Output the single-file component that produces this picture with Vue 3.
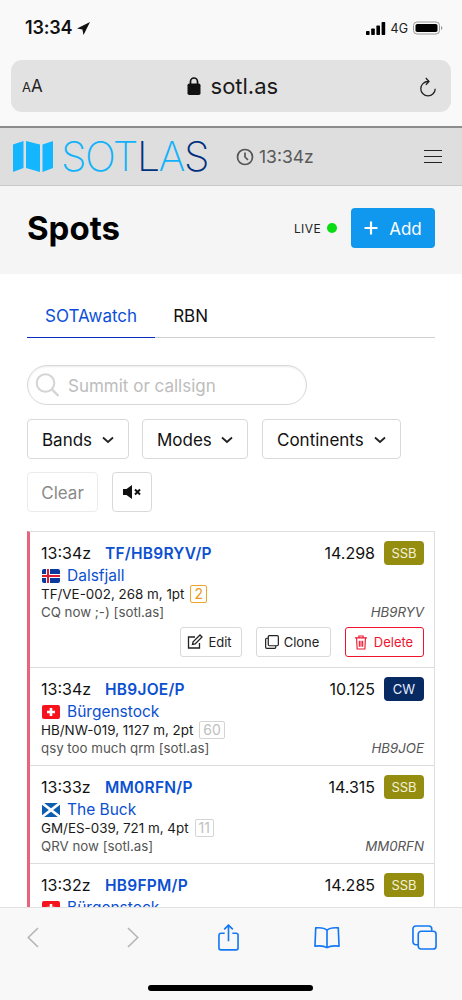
<script setup>
const spots = [
  { time: '13:34z', call: 'TF/HB9RYV/P', freq: '14.298', mode: 'SSB', flag: 'is', name: 'Dalsfjall', info: 'TF/VE-002, 268 m, 1pt', count: '2', countClass: 'orange', note: 'CQ now ;-) [sotl.as]', op: 'HB9RYV', actions: true },
  { time: '13:34z', call: 'HB9JOE/P', freq: '10.125', mode: 'CW', flag: 'ch', name: 'Bürgenstock', info: 'HB/NW-019, 1127 m, 2pt', count: '60', countClass: '', note: 'qsy too much qrm [sotl.as]', op: 'HB9JOE' },
  { time: '13:33z', call: 'MM0RFN/P', freq: '14.315', mode: 'SSB', flag: 'sc', name: 'The Buck', info: 'GM/ES-039, 721 m, 4pt', count: '11', countClass: '', note: 'QRV now [sotl.as]', op: 'MM0RFN' },
  { time: '13:32z', call: 'HB9FPM/P', freq: '14.285', mode: 'SSB', flag: 'ch', name: 'Bürgenstock', info: 'HB/NW-019, 1127 m, 2pt', count: '60', countClass: '', note: 'QRV now [sotl.as]', op: 'HB9FPM' }
]
const filters = ['Bands', 'Modes', 'Continents']
</script>

<template>
  <div class="page">
    <header class="safari-top">
      <div class="status">
        <div class="status-left">
          <span class="clock">13:34</span>
          <svg class="loc" viewBox="0 0 12 12" width="13" height="13"><path d="M12 0 6 12 5 7 0 6z" fill="#111"/></svg>
        </div>
        <div class="status-right">
          <svg width="20" height="13" viewBox="0 0 20 13"><rect x="0" y="9" width="3.600" height="4" rx=".7"/><rect x="5.200" y="6.500" width="3.600" height="6.500" rx=".7"/><rect x="10.400" y="3.500" width="3.600" height="9.500" rx=".7"/><rect x="15.600" y="0" width="3.600" height="13" rx=".7"/></svg>
          <span class="net">4G</span>
          <svg width="30" height="14" viewBox="0 0 30 14"><rect x=".5" y="1" width="26" height="12" rx="3.500" fill="none" stroke="#999"/><rect x="2.500" y="3" width="22" height="8" rx="1.800" fill="#000"/><path d="M28 5v4c.8-.3 1.300-1 1.300-2s-.5-1.700-1.300-2z" fill="#999"/></svg>
        </div>
      </div>
      <div class="address">
        <span class="aa"><small>A</small>A</span>
        <div class="host">
          <svg width="14" height="20" viewBox="0 0 14 20"><path d="M3.500 8V5.500a3.500 3.500 0 0 1 7 0V8" fill="none" stroke="#111" stroke-width="1.700"/><rect x="0.500" y="7.500" width="13" height="11.500" rx="1.800" fill="#111"/></svg>
          <span>sotl.as</span>
        </div>
        <svg class="reload" width="18" height="21" viewBox="0 0 18 21"><path d="M9 4.500a7.200 7.200 0 1 0 7.200 7.200" fill="none" stroke="#222" stroke-width="1.300"/><path d="M6.800 1 10 4.500 6.800 7.800" fill="none" stroke="#222" stroke-width="1.300"/></svg>
      </div>
    </header>

    <nav class="navbar">
      <div class="brand">
        <svg width="40" height="31" viewBox="0 0 40 31"><path d="M0 3.500 10.500 0v27L0 31z" fill="#14b6ff"/><path d="M13 0l14 3.500V31L13 27z" fill="#14b6ff"/><path d="M29.500 3.500 40 0v27l-10.500 4z" fill="#14b6ff"/></svg>
        <span class="logo"><i>SOT</i><b>L</b><i>A</i><b>S</b></span>
      </div>
      <div class="nav-time">
        <svg width="18" height="18" viewBox="0 0 18 18"><circle cx="9" cy="9" r="7.500" fill="none" stroke="#555" stroke-width="1.700"/><path d="M9 4.500V9l3 3" fill="none" stroke="#555" stroke-width="1.700"/></svg>
        <span>13:34z</span>
      </div>
      <div class="burger"><span></span><span></span><span></span></div>
    </nav>

    <section class="hero">
      <h1>Spots</h1>
      <div class="hero-right">
        <span class="live">LIVE</span>
        <span class="dot"></span>
        <button class="add">
          <svg width="14" height="14" viewBox="0 0 14 14"><path d="M7 .5v13M.5 7h13" stroke="#fff" stroke-width="2.200"/></svg>
          <span>Add</span>
        </button>
      </div>
    </section>

    <main class="content">
      <div class="tabs">
        <span class="tab active">SOTAwatch</span>
        <span class="tab">RBN</span>
      </div>

      <div class="search">
        <svg width="27" height="27" viewBox="0 0 27 27"><circle cx="11.500" cy="11" r="8.800" fill="none" stroke="#d4d4d4" stroke-width="2"/><path d="M18 17.500l6.500 6.500" stroke="#d4d4d4" stroke-width="2.400"/></svg>
        <span class="placeholder">Summit or callsign</span>
      </div>

      <div class="filter-row">
        <button v-for="f in filters" :key="f" class="btn filter">
          <span>{{ f }}</span>
          <svg width="12" height="8" viewBox="0 0 12 8"><path d="M1 1.500l5 4.500 5-4.500" fill="none" stroke="#222" stroke-width="1.800"/></svg>
        </button>
      </div>

      <div class="filter-row second">
        <button class="btn clear">Clear</button>
        <button class="btn mute">
          <svg width="19" height="14" viewBox="0 0 19 14"><path d="M0 4h3.500L9 0v14l-5.500-4H0z" fill="#111"/><path d="M12 4.500l5 5M17 4.500l-5 5" stroke="#111" stroke-width="2"/></svg>
        </button>
      </div>

      <div class="list">
        <article v-for="s in spots" :key="s.call" class="spot">
          <div class="line-one">
            <span class="time">{{ s.time }}</span>
            <span class="call">{{ s.call }}</span>
            <span class="freq">{{ s.freq }}</span>
            <span class="mode" :class="s.mode.toLowerCase()">{{ s.mode }}</span>
          </div>
          <div class="line-two">
            <svg class="flag" width="18" height="14" viewBox="0 0 18 14">
              <template v-if="s.flag === 'is'">
                <rect width="18" height="14" rx="2" fill="#0a3a9c"/>
                <path d="M0 7h18M6 0v14" stroke="#fff" stroke-width="4"/>
                <path d="M0 7h18M6 0v14" stroke="#dc1e35" stroke-width="2"/>
              </template>
              <template v-else-if="s.flag === 'ch'">
                <rect width="18" height="14" rx="2" fill="#f5141e"/>
                <path d="M9 3v8M5 7h8" stroke="#fff" stroke-width="2.600"/>
              </template>
              <template v-else>
                <rect width="18" height="14" rx="1" fill="#0d5eaf"/>
                <path d="M0 0l18 14M18 0 0 14" stroke="#fff" stroke-width="2.600"/>
              </template>
            </svg>
            <span class="summit">{{ s.name }}</span>
          </div>
          <div class="line-three">
            <span>{{ s.info }}</span>
            <span class="count" :class="s.countClass">{{ s.count }}</span>
          </div>
          <div class="line-four">
            <span>{{ s.note }}</span>
            <em>{{ s.op }}</em>
          </div>
          <div v-if="s.actions" class="actions">
            <button class="act">
              <svg width="16" height="16" viewBox="0 0 16 16"><path d="M12.500 9v5H1.500V3H8" fill="none" stroke="#222" stroke-width="1.300"/><path d="M5.500 10.500l.6-2.700L13 1l2 2-6.800 6.900z" fill="none" stroke="#222" stroke-width="1.300"/></svg>
              <span>Edit</span>
            </button>
            <button class="act">
              <svg width="14" height="14" viewBox="0 0 15 15"><rect x="3.500" y=".7" width="10.800" height="10.800" rx="1.200" fill="none" stroke="#222" stroke-width="1.300"/><path d="M3.500 3.500H1.800A1.100 1.100 0 0 0 .7 4.600v8.600a1.100 1.100 0 0 0 1.100 1.100h8.600a1.100 1.100 0 0 0 1.100-1.100v-1.700" fill="none" stroke="#222" stroke-width="1.300"/></svg>
              <span>Clone</span>
            </button>
            <button class="act danger">
              <svg width="12" height="15" viewBox="0 0 13 16"><path d="M0 3h13M4.200 3V1h4.600v2M1.700 3l.6 12h8.400l.6-12M4.700 6v6.500M6.500 6v6.500M8.300 6v6.500" fill="none" stroke="#f0142f" stroke-width="1.200"/></svg>
              <span>Delete</span>
            </button>
          </div>
        </article>
      </div>
    </main>

    <footer class="safari-bottom">
      <div class="tools">
        <span class="tool"><svg width="12" height="21" viewBox="0 0 12 21"><path d="M11 1 1.300 10.500 11 20" fill="none" stroke="#b5b5b5" stroke-width="1.600"/></svg></span>
        <span class="tool"><svg width="12" height="21" viewBox="0 0 12 21"><path d="M1 1l9.700 9.500L1 20" fill="none" stroke="#b5b5b5" stroke-width="1.600"/></svg></span>
        <span class="tool"><svg width="21" height="27" viewBox="0 0 22 28"><path d="M7 9.500H3a2 2 0 0 0-2 2V25a2 2 0 0 0 2 2h16a2 2 0 0 0 2-2V11.500a2 2 0 0 0-2-2h-4M11 18V1.500M6.500 5.500 11 1l4.500 4.500" fill="none" stroke="#1478f5" stroke-width="1.700"/></svg></span>
        <span class="tool"><svg width="26" height="23" viewBox="0 0 27 23"><path d="M13.500 4C11 1.500 7 1 1.800 1.500L1 20.500c5-.6 9.500-.4 12.500 1.500 3-1.900 7.500-2.100 12.500-1.500l-.8-19C20 1 16 1.500 13.500 4zM13.500 4v18" fill="none" stroke="#1478f5" stroke-width="1.700" stroke-linejoin="round"/></svg></span>
        <span class="tool"><svg width="25" height="25" viewBox="0 0 26 26"><path d="M6.500 20.500H4A3 3 0 0 1 1 17.500V4a3 3 0 0 1 3-3h13.500a3 3 0 0 1 3 3v2" fill="none" stroke="#1478f5" stroke-width="1.700"/><rect x="6.500" y="6.500" width="18.500" height="18.500" rx="3" fill="none" stroke="#1478f5" stroke-width="1.700"/></svg></span>
      </div>
      <div class="home"></div>
    </footer>
  </div>
</template>

<style>
html, body { margin: 0; background: #fff; }
</style>

<style scoped>
.page {
  position: relative;
  width: 462px;
  height: 1000px;
  overflow: hidden;
  background: #fff;
  font-family: Inter, "Liberation Sans", sans-serif;
  color: #111;
}
button { font-family: inherit; padding: 0; background: #fff; cursor: pointer; }

.safari-top {
  height: 126px;
  background: #f9f9f9;
  border-bottom: 2px solid #8c8c8c;
  padding: 0 11px;
  width: 440px;
}
.status { height: 60px; display: flex; justify-content: space-between; align-items: flex-start; padding: 18px 8px 0 14px; box-sizing: border-box; }
.status-left { display: flex; align-items: center; gap: 5px; }
.clock { font-size: 18px; font-weight: 600; line-height: 20px; letter-spacing: -.2px; }
.status-right { display: flex; align-items: center; gap: 5px; height: 20px; }
.net { font-size: 12.500px; color: #222; }
.address { height: 52px; background: #e2e2e2; border-radius: 11px; display: flex; align-items: center; justify-content: space-between; padding: 0 14px 0 11px; position: relative; }
.aa { font-size: 17px; color: #222; line-height: 1; }
.aa small { font-size: 13px; }
.host { display: flex; align-items: center; gap: 10px; font-size: 22px; color: #1a1a1a; margin-left: 3px; }
.reload { margin-top: 2px; }

.navbar { height: 57px; background: #dedede; border-bottom: 1px solid #c9c9c9; display: flex; align-items: center; padding: 0 20px 0 13px; }
.brand { display: flex; align-items: center; gap: 8px; }
.logo { font-family: Inter, "Open Sans", sans-serif; font-weight: 200; font-size: 41px; line-height: 1; letter-spacing: -1.500px; }
.logo i { font-style: normal; color: #12b2fb; }
.logo b { font-weight: 200; color: #00307f; }
.nav-time { display: flex; align-items: center; gap: 5px; margin-left: 28px; font-size: 17.500px; color: #5a5a5a; }
.burger { margin-left: auto; width: 18px; display: flex; flex-direction: column; gap: 5px; }
.burger span { display: block; height: 1px; background: #222; }

.hero { height: 84px; padding: 0 27px 4px; background: #f5f5f5; display: flex; align-items: center; justify-content: space-between; }
.hero h1 { margin: 0; font-size: 33px; font-weight: 700; color: #000; line-height: 1; }
.hero-right { display: flex; align-items: center; }
.live { font-size: 12px; letter-spacing: .4px; color: #222; }
.dot { width: 10px; height: 10px; border-radius: 50%; background: #0bdc13; margin: 0 14px 0 6px; }
.add { height: 40px; width: 84px; border: 0; border-radius: 4px; background: #1097ee; color: #fff; font-size: 17px; display: flex; align-items: center; justify-content: center; gap: 11px; }
.add span { padding-top: 1px; }

.content { padding: 0 27px; }
.tabs { height: 63px; display: flex; align-items: flex-end; border-bottom: 1px solid #d0d0d0; }
.tab { display: block; padding: 0 18px 10px; font-size: 17px; line-height: 22px; color: #111; margin-bottom: -1px; border-bottom: 1px solid transparent; }
.tab.active { color: #0b4fd8; border-bottom-color: #0a2cc0; }

.search { margin-top: 27px; width: 280px; height: 40px; box-sizing: border-box; border: 1px solid #d8d8d8; border-radius: 20px; display: flex; align-items: center; gap: 7px; padding-left: 6px; box-shadow: inset 0 1px 2px rgba(0,0,0,.08); color: #bdbdbd; font-size: 17px; }
.placeholder { padding-top: 1px; }

.filter-row { display: flex; gap: 13px; margin-top: 14px; }
.filter-row.second { gap: 14px; margin-top: 13px; }
.btn { height: 40px; box-sizing: border-box; border: 1px solid #d9d9d9; border-radius: 4px; font-size: 17px; color: #111; padding-top: 1px; }
.filter { display: flex; align-items: center; justify-content: space-between; padding: 1px 14px 0; width: 102px; }
.filter:nth-child(2) { width: 106px; }
.filter:nth-child(3) { width: 139px; margin-left: 1px; }
.clear { width: 71px; border-color: #ececec; color: #8a8a8a; }
.mute { width: 40px; display: flex; align-items: center; justify-content: center; padding-top: 0; }

.list { margin-top: 19px; border: 1px solid #dedede; border-left: 3px solid #e8637c; }
.spot { padding: 9px 10px 9px 11px; border-bottom: 1px solid #dcdcdc; }
.line-one { display: flex; align-items: center; height: 24px; }
.time { font-size: 16px; color: #111; width: 64px; }
.call { font-size: 15.500px; font-weight: 600; color: #0b50d0; letter-spacing: .25px; }
.freq { margin-left: auto; font-size: 16px; color: #111; }
.mode { width: 40px; height: 24px; margin-left: 9px; border-radius: 4px; display: flex; align-items: center; justify-content: center; font-size: 13px; color: #f2f2d8; }
.mode.ssb { background: #958d10; }
.mode.cw { background: #082a63; color: #e6eeff; }
.line-two { display: flex; align-items: center; gap: 7px; height: 19px; margin-top: 1px; }
.flag { flex: none; margin-left: 1px; }
.summit { font-size: 15.500px; color: #0b50d0; }
.line-three { display: flex; align-items: center; gap: 6px; height: 17px; font-size: 13.400px; color: #1a1a1a; }
.count { box-sizing: border-box; height: 18px; border: 1px solid #d4d4d4; border-radius: 2px; padding: 0 3px; line-height: 16px; font-size: 14px; color: #c0c0c0; }
.count.orange { border-color: #eea52a; color: #e99a1c; }
.line-four { display: flex; justify-content: space-between; align-items: center; height: 17px; margin-top: 1px; font-size: 13.300px; color: #555; }
.line-four em { font-size: 13.300px; color: #555; }
.actions { display: flex; justify-content: flex-end; gap: 14px; margin: 7px 0 1px; }
.act { box-sizing: border-box; height: 30px; border: 1px solid #d9d9d9; border-radius: 3px; display: flex; align-items: center; justify-content: center; gap: 5px; padding-right: 3px; font-size: 13px; color: #222; width: 62px; }
.act:nth-child(2) { width: 75px; }
.act.danger { width: 79px; padding-right: 1px; gap: 7px; border-color: #f0142f; color: #f0142f; }

.safari-bottom { position: absolute; left: 0; right: 0; bottom: 0; height: 93px; background: #f8f8f8; border-top: 1px solid #e2e2e2; box-sizing: border-box; }
.tools { display: flex; justify-content: space-between; padding: 15px 24.500px 0 19.500px; }
.tool { width: 26px; height: 28px; display: flex; align-items: center; justify-content: center; }
.tool:nth-child(2) { margin: 0 -2px 0 2px; }
.home { position: absolute; left: 148px; top: 77px; width: 165px; height: 6px; border-radius: 3px; background: #000; }
</style>
